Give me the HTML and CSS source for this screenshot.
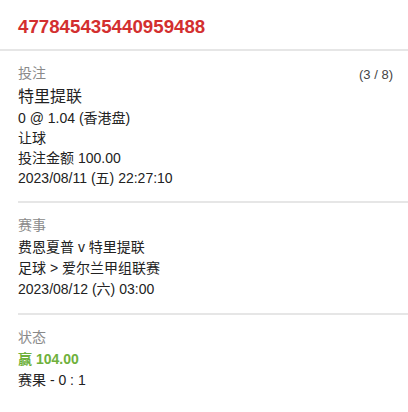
FILE: index.html
```html
<!DOCTYPE html>
<html lang="zh">
<head>
  <meta charset="UTF-8">
  <meta name="viewport" content="width=device-width, initial-scale=1">
  <title>投注详情</title>
  <link rel="stylesheet" href="styles.css">
</head>
<body>
  <div class="bet-detail">
    <div class="header">
      <h3 class="bet-id">477845435440959488</h3>
    </div>

    <!-- 投注 -->
    <div class="section bet">
      <div class="label-row">
        <span class="label">投注</span>
        <span class="count">(3 / 8)</span>
      </div>
      <div class="selection">特里提联</div>
      <div class="line">0 @ 1.04 (香港盘)</div>
      <div class="line">让球</div>
      <div class="line">投注金额 100.00</div>
      <div class="line">2023/08/11 (五) 22:27:10</div>
    </div>

    <!-- 赛事 -->
    <div class="section">
      <div class="label">赛事</div>
      <div class="line">费恩夏普 v 特里提联</div>
      <div class="line">足球 &gt; 爱尔兰甲组联赛</div>
      <div class="line">2023/08/12 (六) 03:00</div>
    </div>

    <!-- 状态 -->
    <div class="section last">
      <div class="label">状态</div>
      <div class="line win">赢 104.00</div>
      <div class="line">赛果 - 0 : 1</div>
    </div>
  </div>
</body>
</html>
```

FILE: styles.css
```css
body {
  margin: 0;
  background: #fff;
  font-family: Arial, "Liberation Sans", "Noto Sans CJK SC", sans-serif;
  font-size: 14px;
  line-height: 21px;
  color: #222;
}
.header {
  height: 49px;
  padding: 0 18px;
  border-bottom: 2px solid #e6e6e6;
  display: flex;
  align-items: center;
}
.bet-id {
  margin: 0;
  font-size: 18.72px;
  font-weight: bold;
  color: #d32f2f;
  line-height: 24px;
  padding-top: 4px;
}
.section {
  margin-left: 18px;
  padding: 12px 15px 13px 0;
  border-bottom: 2px solid #e6e6e6;
}
.section.last {
  border-bottom: none;
}
.bet .line {
  line-height: 20px;
}
.label-row {
  display: flex;
  justify-content: space-between;
  align-items: center;
}
.label {
  color: #8a8a8a;
  margin-bottom: 1px;
}
.count {
  font-size: 13px;
  color: #444;
}
.selection {
  font-size: 16px;
  line-height: 23px;
}
.win {
  color: #6fb13c;
  font-weight: bold;
}
```
